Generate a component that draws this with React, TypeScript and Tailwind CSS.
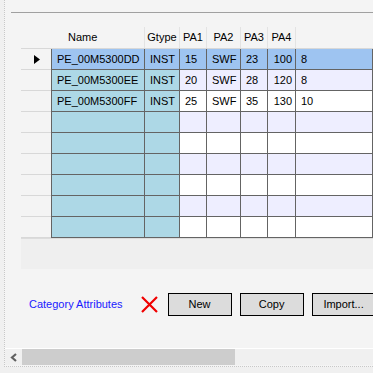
const rows = [
  { name: "PE_00M5300DD", gtype: "INST", pa1: "15", pa2: "SWF", pa3: "23", pa4: "100", extra: "8" },
  { name: "PE_00M5300EE", gtype: "INST", pa1: "20", pa2: "SWF", pa3: "28", pa4: "120", extra: "8" },
  { name: "PE_00M5300FF", gtype: "INST", pa1: "25", pa2: "SWF", pa3: "35", pa4: "130", extra: "10" },
  null,
  null,
  null,
  null,
  null,
  null,
];

function GridRow({ row, index }: { row: (typeof rows)[number]; index: number }) {
  const selected = index === 0;
  const keyBg = selected ? "bg-[#9ec4f1]" : "bg-[#add8e6]";
  const cellBg = selected ? "bg-[#9ec4f1]" : index % 2 === 1 ? "bg-[#eeeeff]" : "bg-white";
  const cell = "h-[21px] border-r border-b border-[#646464] flex items-center shrink-0";
  return (
    <div className="flex">
      {/* row header */}
      <div className="w-[30px] h-[21px] shrink-0 border-b border-[#d8d8d8] flex items-center pl-[13px]">
        {selected && (
          <svg width="6" height="9" viewBox="0 0 6 9">
            <path d="M0 0 L6 4.5 L0 9 Z" fill="#000" />
          </svg>
        )}
      </div>
      <div className={`${cell} ${keyBg} w-[94px] border-l pl-[5px]`}>{row?.name}</div>
      <div className={`${cell} ${keyBg} w-[35px] pl-[5px]`}>{row?.gtype}</div>
      <div className={`${cell} ${cellBg} w-[27px] pl-[5px]`}>{row?.pa1}</div>
      <div className={`${cell} ${cellBg} w-[34px] pl-[5px]`}>{row?.pa2}</div>
      <div className={`${cell} ${cellBg} w-[27px] pl-[5px]`}>{row?.pa3}</div>
      <div className={`${cell} ${cellBg} w-[28px] justify-end pr-[3px]`}>{row?.pa4}</div>
      <div className={`${cell} ${cellBg} flex-1 pl-[5px]`}>{row?.extra}</div>
    </div>
  );
}

export default function App() {
  return (
    <div
      className="w-[373px] h-[373px] overflow-hidden bg-[#f0f0f0] text-[11px] text-black"
      style={{ fontFamily: '"Liberation Sans", Arial, sans-serif' }}
    >
      <div className="ml-1 h-[367px] bg-[#f4f4f4] border-l border-b border-dotted border-[#c8c8c8] flex flex-col">
        {/* top separator */}
        <div className="mt-3 ml-[6px] h-px bg-[#a0a0a0]" />

        {/* grid */}
        <div className="mt-[14px] ml-4 flex flex-col">
          <div className="flex h-[22px] border-b border-[#d8d8d8]">
            <div className="w-[30px] shrink-0" />
            <div className="w-[94px] shrink-0 border-r border-[#e3e3e3] flex items-center pl-[17px]">Name</div>
            <div className="w-[35px] shrink-0 border-r border-[#e3e3e3] flex items-center justify-center">Gtype</div>
            <div className="w-[27px] shrink-0 border-r border-[#e3e3e3] flex items-center justify-center">PA1</div>
            <div className="w-[34px] shrink-0 border-r border-[#e3e3e3] flex items-center justify-center">PA2</div>
            <div className="w-[27px] shrink-0 border-r border-[#e3e3e3] flex items-center justify-center">PA3</div>
            <div className="w-[28px] shrink-0 border-r border-[#e3e3e3] flex items-center justify-center">PA4</div>
            <div className="flex-1" />
          </div>
          {rows.map((row, i) => (
            <GridRow key={i} row={row} index={i} />
          ))}
          <div className="h-[31px] bg-[#efefef] border-t border-[#dcdcdc]" />
        </div>

        {/* action row */}
        <div className="mt-[24px] flex items-center h-[23px] whitespace-nowrap">
          <span className="ml-6 shrink-0 text-[#1a1aff]">Category Attributes</span>
          <svg className="ml-[18px] shrink-0" width="17" height="17" viewBox="0 0 17 17">
            <path d="M1 1 L16 16 M16 1 L1 16" stroke="#f00000" strokeWidth="2.2" />
          </svg>
          <div className="ml-[10px] flex gap-2 shrink-0">
            <button className="w-16 h-[23px] shrink-0 border border-black bg-[#dcdcdc]">New</button>
            <button className="w-16 h-[23px] shrink-0 border border-black bg-[#dcdcdc]">Copy</button>
            <button className="w-16 h-[23px] shrink-0 border border-black bg-[#dcdcdc]">Import...</button>
          </div>
        </div>

        {/* horizontal scrollbar */}
        <div className="mt-auto border-t border-white flex h-[17px] bg-[#f0f0f0]">
          <div className="w-[17px] flex items-center justify-center">
            <svg width="8" height="9" viewBox="0 0 8 9">
              <path d="M6 1 L2 4.5 L6 8" stroke="#606060" strokeWidth="2.2" fill="none" />
            </svg>
          </div>
          <div className="w-[213px] bg-[#cdcdcd]" />
        </div>
        <div className="h-[1px]" />
      </div>
    </div>
  );
}
